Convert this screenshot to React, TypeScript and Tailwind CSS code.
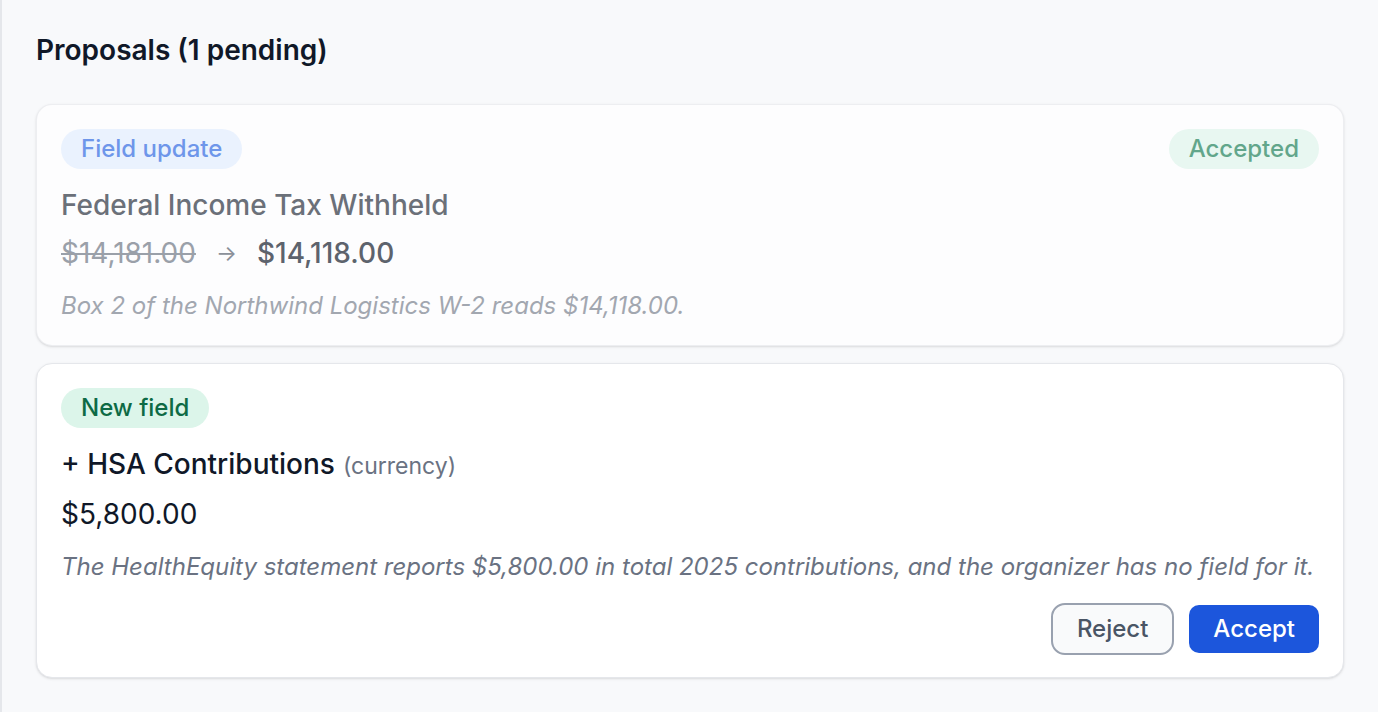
import React from "react";

const font = { fontFamily: "Inter, 'Noto Sans', sans-serif" };

function Badge({ cls, children }: { cls: string; children: React.ReactNode }) {
  return (
    <span className={`inline-flex h-10 items-center rounded-full px-5 text-[24px] font-medium leading-none ${cls}`}>
      {children}
    </span>
  );
}

export default function App() {
  return (
    <div className="min-h-[712px] w-full border-l-2 border-gray-200 bg-[#f8f9fb] px-[34px] pt-8 pb-8" style={font}>
      <h2 className="mb-9 text-[28px] font-semibold leading-9 text-gray-900">Proposals (1 pending)</h2>

      <div className="flex flex-col gap-[17px]">
        {/* accepted proposal, faded */}
        <div className="rounded-2xl border border-gray-200/70 bg-[#fdfdfe] px-6 pt-6 pb-[23px] shadow-sm">
          <div className="flex items-start justify-between">
            <Badge cls="bg-[#eaf2fe] text-[#6e96ea]">Field update</Badge>
            <Badge cls="bg-[#e8f7f1] text-[#62a68b]">Accepted</Badge>
          </div>
          <div className="mt-[18px] text-[28px] font-medium leading-9 text-[#6b7079]">Federal Income Tax Withheld</div>
          <div className="mt-3 flex items-center gap-5 text-[28px] leading-9">
            <span className="text-[#9aa0a9] line-through decoration-2">$14,181.00</span>
            <span className="text-[22px] text-[#8b9099]">→</span>
            <span className="font-medium text-[#5d636d]">$14,118.00</span>
          </div>
          <p className="mt-[19px] text-[24px] italic leading-8 text-[#a2a7b0]">
            Box 2 of the Northwind Logistics W-2 reads $14,118.00.
          </p>
        </div>

        {/* pending proposal */}
        <div className="rounded-2xl border border-gray-200 bg-white px-6 pt-6 pb-[22px] shadow-sm">
          <Badge cls="bg-[#dcf5ea] text-[#0e6a45]">New field</Badge>
          <div className="mt-[18px] flex items-baseline gap-2 leading-9">
            <span className="text-[28px] font-medium text-gray-900">+ HSA Contributions</span>
            <span className="text-[23px] text-gray-500">(currency)</span>
          </div>
          <div className="mt-3 text-[28px] leading-9 text-gray-900">$5,800.00</div>
          <p className="mt-[19px] text-[24px] italic leading-8 text-gray-500">
            The HealthEquity statement reports $5,800.00 in total 2025 contributions, and the organizer has no field for it.
          </p>
          <div className="mt-5 flex items-center justify-end gap-[15px]">
            <button className="h-[52px] rounded-[14px] border-2 border-gray-400 bg-gray-50 px-6 text-[24px] font-medium text-gray-600">
              Reject
            </button>
            <button className="h-12 rounded-[10px] bg-[#1c56dc] px-6 text-[24px] font-medium text-white">
              Accept
            </button>
          </div>
        </div>
      </div>
    </div>
  );
}
